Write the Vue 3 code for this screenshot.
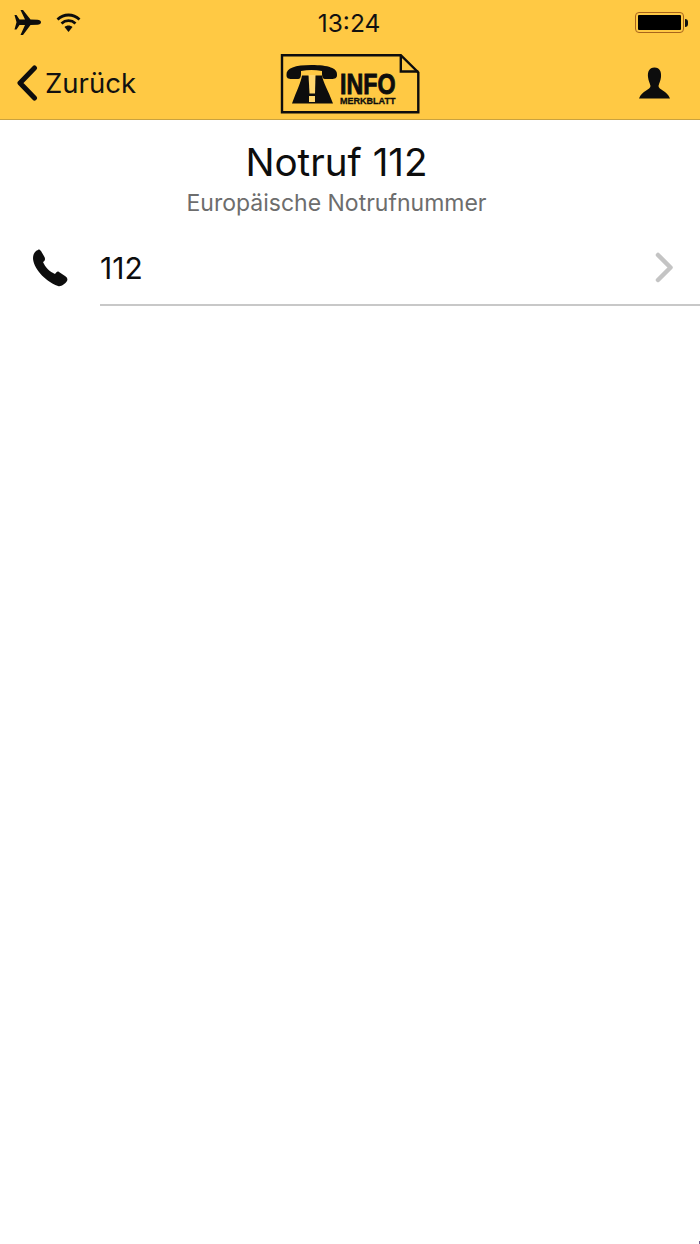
<script setup>
const title = 'Notruf 112'
const subtitle = 'Europäische Notrufnummer'
const number = '112'
</script>

<template>
  <div class="page">
    <header class="head">
      <div class="status">
        <div class="status-left">
          <svg class="plane" viewBox="14 10 27 25" width="27" height="25">
            <path d="M14.5 15 L16.5 15 L19.5 19.6 L25 19.6 L20.5 10 L23 10 L30.5 19.6 L37.5 19.8 C39.5 20 41 21 41 22.3 C41 23.6 39.5 24.6 37.5 24.8 L30.5 25 L23 35 L20.5 35 L25 25 L19.5 25 L16.5 29.5 L14.5 29.5 L16.5 22.3 Z" />
          </svg>
          <svg class="wifi" viewBox="56 12 26 20" width="26" height="20">
            <path class="arc" d="M57.5 18.5 C64 12.5 73 12.5 79.5 18.5" />
            <path class="arc" d="M61.5 22.5 C65.5 18.8 71.5 18.8 75.5 22.5" />
            <path d="M64.5 26 C66.8 24 70.2 24 72.5 26 L68.5 31 Z" />
          </svg>
        </div>
        <div class="time">13:24</div>
        <div class="status-right">
          <div class="battery"><div class="battery-fill"></div></div>
          <div class="nub"></div>
        </div>
      </div>
      <nav class="nav">
        <div class="back">
          <svg class="chevron" viewBox="0 0 22 36" width="22" height="36">
            <path d="M18.5 3 L4 18 L18.5 33" />
          </svg>
          <span>Zurück</span>
        </div>
        <svg class="logo" viewBox="280 53 140 62" width="140" height="62">
          <path class="frame" d="M282 55.2 H400.8 L418.3 72.5 V112.3 H282 Z" />
          <path class="frame" d="M400.8 55.2 V71.5 H418.3" />
          <path d="M286.5 75 C286 68 295 65 311.5 65 C328 65 338 68 337 75 C337 78 335 79 331 79 H325 C323 79 322 77 322 74 L322 71 C315 69.5 308 69.5 301 71 L301 74 C301 77 300 79 298 79 H292 C288 79 286.5 78 286.5 75 Z" />
          <path d="M302 75.5 H322 C323 82 328 90 333 103.5 H292 C297 90 301 82 302 75.5 Z" />
          <path class="mark" d="M308.5 75 H315.5 L315 93.5 H309.5 Z" />
          <rect class="mark" x="309" y="96" width="6" height="6" />
          <text class="info" x="340" y="93.5" textLength="55.5" lengthAdjust="spacingAndGlyphs">INFO</text>
          <text class="merk" x="340" y="104.3" textLength="55.5" lengthAdjust="spacingAndGlyphs">MERKBLATT</text>
        </svg>
        <div class="nav-right">
          <svg class="person" viewBox="639 67 31 32" width="31" height="32">
            <path d="M654.5 67.5 C660 67.5 661.5 72 661 77 C660.6 81 659 83.5 658.5 86 C658.5 90 667 90.5 670 98.5 H639 C642 90.5 650.5 90 650.5 86 C650 83.5 648.4 81 648 77 C647.5 72 649 67.5 654.5 67.5 Z" />
          </svg>
        </div>
      </nav>
    </header>

    <main>
      <section class="heading">
        <h1>{{ title }}</h1>
        <p>{{ subtitle }}</p>
      </section>
      <div class="row">
        <svg class="phone" viewBox="33 250 35 38" width="35" height="38">
          <path d="M38 251 C35 252 33 255 33 259 C33 268 44 282 58 287 C61 288 65 285 67 282 C68 280 67 278 65 277 L59 273 C57.5 272 56.5 273 55 275 C50 273 45 268 43 263 C45 262 45.5 260 44.5 258 L41 252 C40 251 39 250 38 251 Z" />
        </svg>
        <div class="row-body">
          <span class="num">{{ number }}</span>
          <svg class="disclosure" viewBox="0 0 20 32" width="20" height="32">
            <path d="M4 3 L16.5 15.5 L4 28" />
          </svg>
        </div>
      </div>
    </main>
    <i class="speck"></i>
  </div>
</template>

<style>
html, body { margin: 0; background: #fff; }
</style>

<style scoped>
.page {
  position: relative;
  width: 700px;
  height: 1244px;
  overflow: hidden;
  background: #fff;
  color: #000;
  font-family: Inter, "Liberation Sans", sans-serif;
}
.speck {
  position: absolute;
  right: 0;
  bottom: 0;
  width: 1px;
  height: 3px;
  background: #6f5f8f;
}
.head {
  height: 120px;
  box-sizing: border-box;
  background: #ffc944;
  border-bottom: 1px solid #c9a23f;
}
.status {
  height: 45px;
  display: grid;
  grid-template-columns: 1fr auto 1fr;
  align-items: center;
}
.status-left {
  display: flex;
  align-items: center;
  gap: 15px;
  padding-left: 14px;
}
.time {
  font-size: 24.5px;
  color: #111;
  margin-left: -2px;
  padding-top: 1px;
}
.status-right {
  display: flex;
  justify-content: flex-end;
  align-items: center;
  padding-right: 12px;
}
.battery {
  width: 49px;
  height: 21px;
  box-sizing: border-box;
  border: 1px solid #a8641c;
  border-radius: 4px;
  padding: 2px;
}
.battery-fill { width: 100%; height: 100%; background: #000; border-radius: 1px; }
.nub {
  width: 3px;
  height: 8px;
  margin-left: 1px;
  background: #111;
  border-radius: 0 3px 3px 0;
}
.nav {
  height: 74px;
  display: grid;
  grid-template-columns: 1fr auto 1fr;
  align-items: start;
}
.back {
  display: flex;
  align-items: center;
  gap: 7px;
  padding: 20px 0 0 16px;
  font-size: 27.5px;
  line-height: 36px;
  color: #111;
}
.logo { display: block; margin-top: 8px; }
.nav-right {
  display: flex;
  justify-content: flex-end;
  padding: 22px 30px 0 0;
}
svg { display: block; fill: #0d0d0d; }
.chevron path { fill: none; stroke: #0d0d0d; stroke-width: 5; stroke-linecap: round; stroke-linejoin: round; }
.arc { fill: none; stroke: #0d0d0d; stroke-width: 2.8; }
.frame { fill: none; stroke: #0d0d0d; stroke-width: 2.4; }
.mark { fill: #ffd66e; }
.info { font: 700 29.5px "Liberation Sans", sans-serif; stroke: #0d0d0d; stroke-width: 0.9; }
.merk { font: 700 9.8px "Liberation Sans", sans-serif; stroke: #0d0d0d; stroke-width: 0.3; }
.heading { text-align: center; padding-right: 27px; padding-top: 17px; }
h1 {
  margin: 0;
  font-size: 38.6px;
  font-weight: 400;
  line-height: 50px;
  color: #0d0d0d;
}
.heading p {
  margin: 0;
  font-size: 23px;
  line-height: 32px;
  color: #6d6d6d;
}
.row {
  display: flex;
  align-items: stretch;
  margin-top: 12px;
}
.phone { margin: 18px 32px 0 33px; flex: none; }
.row-body {
  flex: 1;
  height: 73px;
  display: flex;
  justify-content: space-between;
  align-items: center;
  border-bottom: 2px solid #c8c8c8;
  font-size: 30px;
  color: #0d0d0d;
  padding-right: 26px;
}
.num { padding-top: 1px; }
.disclosure path { fill: none; stroke: #c4c4c4; stroke-width: 4.5; stroke-linecap: round; stroke-linejoin: round; }
</style>
